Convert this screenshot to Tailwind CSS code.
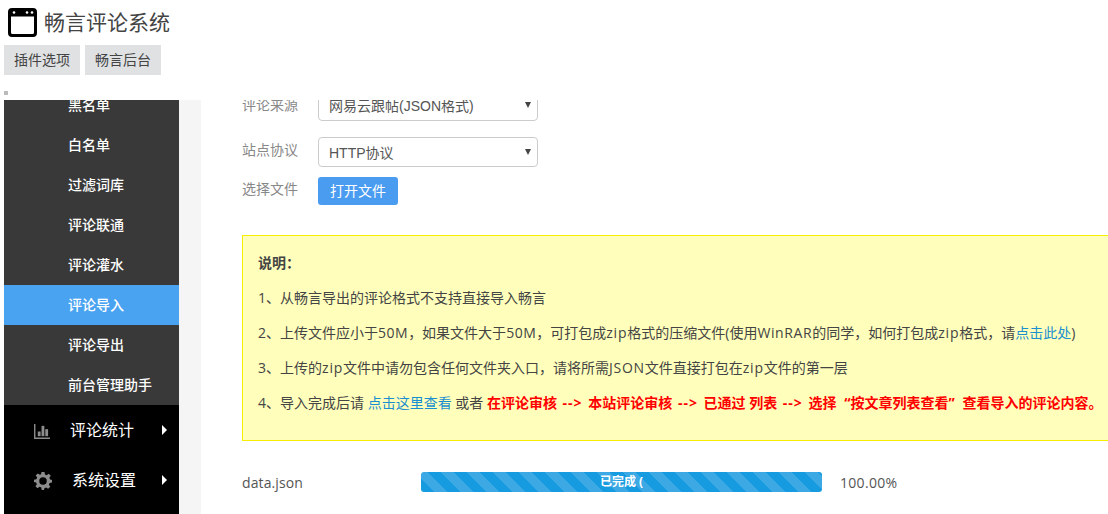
<!DOCTYPE html>
<html lang="zh">
<head>
<meta charset="utf-8">
<script src="https://cdn.jsdelivr.net/npm/@tailwindcss/browser@4"></script>
</head>
<body class="bg-white w-[1108px] h-[514px] overflow-hidden font-['Open_Sans','Noto_Sans_CJK_SC',sans-serif] text-[#444]">
<header class="h-[100px] relative">
  <div class="flex items-center h-[45px] pl-[7px] gap-[6px]">
    <svg class="w-[31px] h-[31px]" viewBox="0 0 31 31"><path fill-rule="evenodd" fill="#000" d="M5 1h21a4 4 0 0 1 4 4v21a4 4 0 0 1-4 4H5a4 4 0 0 1-4-4V5a4 4 0 0 1 4-4zM4 9.500v16a1.500 1.500 0 0 0 1.500 1.500h20a1.500 1.500 0 0 0 1.500-1.500v-16z"/><circle cx="7" cy="5.500" r="1.300" fill="#fff"/><circle cx="20" cy="5.500" r="1.300" fill="#fff"/><circle cx="25" cy="5.500" r="1.300" fill="#fff"/></svg>
    <h1 class="text-[21px] leading-[30px] text-[#444] font-normal mt-[-2px]">畅言评论系统</h1>
  </div>
  <nav class="flex pl-[4px] gap-[5px]">
    <a class="w-[76px] h-[30px] bg-[#dfe1e3] text-[14px] leading-[30px] text-center text-[#444]">插件选项</a>
    <a class="w-[76px] h-[30px] bg-[#dfe1e3] text-[14px] leading-[30px] text-center text-[#444]">畅言后台</a>
  </nav>
  <div class="absolute left-[4px] top-[91px] w-[4px] h-[4px] bg-[#bbb]"></div>
</header>
<div class="flex h-[414px] pl-[4px] overflow-hidden">
  <aside class="w-[175px] shrink-0 bg-black text-white overflow-hidden">
    <ul class="bg-[#393939] mt-[-15px] text-[14px] font-medium">
      <li class="h-[40px] leading-[40px] pl-[64px]">黑名单</li>
      <li class="h-[40px] leading-[40px] pl-[64px]">白名单</li>
      <li class="h-[40px] leading-[40px] pl-[64px]">过滤词库</li>
      <li class="h-[40px] leading-[40px] pl-[64px]">评论联通</li>
      <li class="h-[40px] leading-[40px] pl-[64px]">评论灌水</li>
      <li class="h-[40px] leading-[40px] pl-[64px] bg-[#4aa3f0]">评论导入</li>
      <li class="h-[40px] leading-[40px] pl-[64px]">评论导出</li>
      <li class="h-[40px] leading-[40px] pl-[64px]">前台管理助手</li>
    </ul>
    <div class="h-[50px] flex items-center relative text-[16px]">
      <svg class="absolute left-[30px] top-[19px] w-[16px] h-[15px]" viewBox="0 0 17 16" fill="#8c8c8c"><path d="M0 0h1.500v14.500H17V16H0z"/><rect x="4" y="8" width="3" height="5"/><rect x="8" y="2" width="3" height="11"/><rect x="12" y="5.500" width="3" height="7.500"/></svg>
      <span class="ml-[66px]">评论统计</span>
      <span class="absolute left-[158px] top-[20px] w-0 h-0 border-y-[5.500px] border-y-transparent border-l-[5px] border-l-white"></span>
    </div>
    <div class="h-[50px] flex items-center relative text-[16px]">
      <svg class="absolute left-[30px] top-[17px] w-[18px] h-[18px]" viewBox="0 0 24 24"><path fill="#8c8c8c" fill-rule="evenodd" d="M10 0h4l.6 3.200 2.300 1 2.700-1.900 2.800 2.800-1.900 2.700 1 2.300L24 10.700v3.300l-3.200.6-1 2.300 1.900 2.700-2.800 2.800-2.700-1.900-2.300 1L13.300 24h-3l-.6-3.200-2.300-1-2.700 1.900-2.800-2.800 1.900-2.700-1-2.300L0 13.300v-3l3.200-.6 1-2.300-1.900-2.700L5.100 1.900l2.700 1.900 1.600-.7zM12 7a5 5 0 1 0 0 10 5 5 0 0 0 0-10z"/></svg>
      <span class="ml-[68px]">系统设置</span>
      <span class="absolute left-[158px] top-[20px] w-0 h-0 border-y-[5.500px] border-y-transparent border-l-[5px] border-l-white"></span>
    </div>
  </aside>
  <div class="w-[22px] shrink-0 bg-[#f5f5f5]"></div>
  <main class="w-[907px] shrink-0 pl-[41px] overflow-hidden">
    <div class="mt-[-9px] flex items-center h-[30px]">
      <label class="w-[76px] text-[14px] text-[#888] leading-[20px] mt-[-3px]">评论来源</label>
      <div class="relative w-[220px] h-[30px] border border-[#ccc] rounded-[4px] text-[14px] font-['Liberation_Sans','Noto_Sans_CJK_SC',sans-serif] leading-[28px] pl-[10px] text-[#555]">网易云跟帖(JSON格式)<span class="absolute right-[6px] top-[10px] w-0 h-0 border-x-[3.500px] border-x-transparent border-t-[6px] border-t-[#444]"></span></div>
    </div>
    <div class="mt-[16px] flex items-center h-[30px]">
      <label class="w-[76px] text-[14px] text-[#888] leading-[20px] mt-[-4px]">站点协议</label>
      <div class="relative w-[220px] h-[30px] border border-[#ccc] rounded-[4px] text-[14px] font-['Liberation_Sans','Noto_Sans_CJK_SC',sans-serif] leading-[30px] pl-[10px] text-[#555]">HTTP协议<span class="absolute right-[6px] top-[11px] w-0 h-0 border-x-[3.500px] border-x-transparent border-t-[6px] border-t-[#444]"></span></div>
    </div>
    <div class="mt-[10px] flex items-center h-[28px]">
      <label class="w-[76px] text-[14px] text-[#888] leading-[20px] mt-[-4px]">选择文件</label>
      <button class="w-[80px] h-[28px] bg-[#4a9cf0] rounded-[3px] text-white text-[14px] leading-[28px] text-center">打开文件</button>
    </div>
    <section class="mt-[30px] w-[900px] h-[206px] bg-[#ffffbb] border border-[#f5ee00] pt-[17px] pl-[15px] text-[14px] text-[#444] whitespace-nowrap">
      <p class="h-[20px] leading-[20px] font-bold">说明：</p>
      <p class="h-[20px] leading-[20px] mt-[15px]">1、从畅言导出的评论格式不支持直接导入畅言</p>
      <p class="h-[20px] leading-[20px] mt-[15px]">2、上传文件应小于<span class="tracking-[0.5px]">50M</span>，如果文件大于<span class="tracking-[0.5px]">50M</span>，可打包成<span class="tracking-[0.8px]">zip</span>格式的压缩文件(使用<span class="tracking-[0.6px]">WinRAR</span>的同学，如何打包成<span class="tracking-[0.8px]">zip</span>格式，请<a class="text-[#1a8fd0]">点击此处</a>)</p>
      <p class="h-[20px] leading-[20px] mt-[15px]">3、上传的<span class="tracking-[0.8px]">zip</span>文件中请勿包含任何文件夹入口，请将所需<span class="tracking-[0.7px]">JSON</span>文件直接打包在<span class="tracking-[0.8px]">zip</span>文件的第一层</p>
      <p class="h-[20px] leading-[20px] mt-[15px]">4、导入完成后请 <a class="text-[#1a8fd0]">点击这里查看</a> 或者 <b class="text-[#f00]">在评论审核 <span class="mx-[2px] tracking-[1px]">--&gt;</span> 本站评论审核 <span class="mx-[2px] tracking-[1px]">--&gt;</span> 已通过 列表 <span class="mx-[2px] tracking-[1px]">--&gt;</span> 选择<span class="inline-block w-[14px] text-right">“</span>按文章列表查看<span class="inline-block w-[14px] text-left">”</span>查看导入的评论内容。</b></p>
    </section>
    <div class="mt-[31px] flex items-center h-[20px] text-[14px]">
      <span class="w-[179px] text-[#555] tracking-[0.1px]">data.json</span>
      <div class="w-[401px] h-[20px] rounded-[3px] bg-[repeating-linear-gradient(45deg,#169ae0_0px,#169ae0_9.200px,#3ca9e4_9.200px,#3ca9e4_18.400px)] text-white text-[12px] font-bold text-center leading-[20px]">已完成 (</div>
      <span class="ml-[18px] text-[#555] tracking-[0.3px]">100.00%</span>
    </div>
  </main>
</div>
</body>
</html>
